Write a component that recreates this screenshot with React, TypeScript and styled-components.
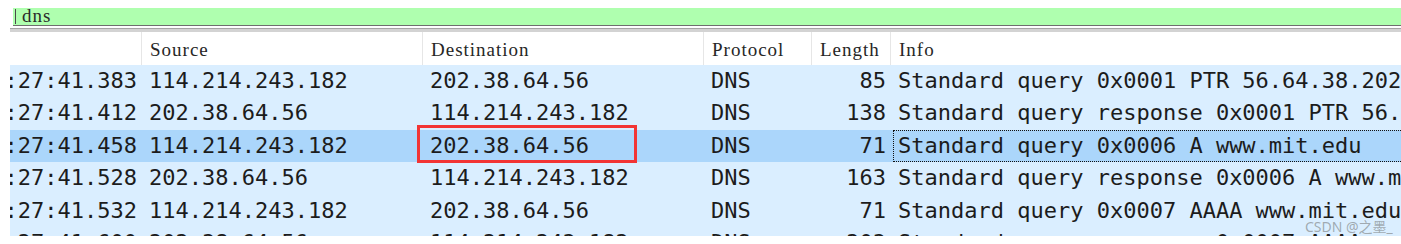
import React from "react";
import styled, { createGlobalStyle, css } from "styled-components";

const GlobalStyle = createGlobalStyle`
  html, body {
    margin: 0;
    padding: 0;
    background: #ffffff;
    overflow: hidden;
  }
`;

const COLUMNS = "132px 281px 281px 108px 79px 1fr";
const MONO = `"DejaVu Sans Mono", "Liberation Mono", monospace`;
const SERIF = `"Liberation Serif", "DejaVu Serif", serif`;

const Page = styled.div`
  position: relative;
  width: 1401px;
  height: 244px;
  overflow: hidden;
  background: #ffffff;
`;

// display filter
const FilterBar = styled.div`
  margin: 8px 0 0 13px;
  height: 17px;
  background: #afffaf;
  border-bottom: 1px solid #6e6e6e;
  display: flex;
  align-items: center;
`;

const Caret = styled.span`
  width: 1px;
  height: 15px;
  margin-left: 2px;
  background: #4a4a4a;
`;

const FilterText = styled.span`
  margin-left: 6px;
  font-family: ${SERIF};
  font-size: 19px;
  letter-spacing: 1px;
  line-height: 17px;
  color: #2a2a2a;
  padding-bottom: 2px;
`;

const Splitter = styled.div`
  margin: 2px 0 0 10px;
  height: 3px;
  border-top: 1px solid #a4a4a4;
  background: #d3d3d3;
`;

// packet list
const List = styled.div`
  margin-left: 10px;
  height: 204px;
  overflow: hidden;
`;

const HeaderRow = styled.div`
  display: grid;
  grid-template-columns: ${COLUMNS};
  height: 33px;
  background: #ffffff;
`;

const HeaderCell = styled.div`
  border-right: 1px solid #e6e6e6;
  padding: 2px 0 0 8px;
  font-family: ${SERIF};
  font-size: 19px;
  letter-spacing: 1px;
  line-height: 31px;
  color: #262626;
  white-space: nowrap;
  overflow: hidden;
  &:last-child {
    border-right: 0;
  }
`;

const Row = styled.div<{ $selected?: boolean }>`
  display: grid;
  grid-template-columns: ${COLUMNS};
  height: 32.4px;
  background: ${(p) => (p.$selected ? "#abd6fb" : "#daeeff")};
`;

const Cell = styled.div<{ $align?: "left" | "right" }>`
  position: relative;
  display: flex;
  justify-content: ${(p) => (p.$align === "right" ? "flex-end" : "flex-start")};
  padding: ${(p) => (p.$align === "right" ? "0 5px 0 0" : "0 0 0 7px")};
  font-family: ${MONO};
  font-size: 22px;
  line-height: 32.4px;
  color: #1c1c1c;
  white-space: nowrap;
  overflow: ${(p) => (p.$align === "right" ? "hidden" : "visible")};
`;

const InfoCell = styled(Cell)<{ $focus?: boolean }>`
  overflow: hidden;
  ${(p) =>
    p.$focus &&
    css`
      &::before {
        content: "";
        position: absolute;
        top: 0;
        bottom: 0;
        left: 2px;
        right: -4px;
        border: 1px dotted #111;
      }
    `}
`;

const Marker = styled.div`
  position: absolute;
  left: -6px;
  top: -5px;
  width: 220px;
  height: 38px;
  box-sizing: border-box;
  border: 3px solid #f23434;
  pointer-events: none;
`;

const Watermark = styled.div`
  position: absolute;
  left: 1305px;
  top: 219px;
  font-family: "Noto Sans", "Noto Sans CJK SC", sans-serif;
  font-size: 14px;
  line-height: 16px;
  color: rgba(110, 110, 110, 0.55);
`;

type Packet = {
  time: string;
  src: string;
  dst: string;
  proto: string;
  len: string;
  info: string;
};

const packets: Packet[] = [
  { time: ":27:41.383", src: "114.214.243.182", dst: "202.38.64.56", proto: "DNS", len: "85", info: "Standard query 0x0001 PTR 56.64.38.202.in-addr.arpa" },
  { time: ":27:41.412", src: "202.38.64.56", dst: "114.214.243.182", proto: "DNS", len: "138", info: "Standard query response 0x0001 PTR 56.64.38.202.in-addr.arpa" },
  { time: ":27:41.458", src: "114.214.243.182", dst: "202.38.64.56", proto: "DNS", len: "71", info: "Standard query 0x0006 A www.mit.edu" },
  { time: ":27:41.528", src: "202.38.64.56", dst: "114.214.243.182", proto: "DNS", len: "163", info: "Standard query response 0x0006 A www.mit.edu CNAME" },
  { time: ":27:41.532", src: "114.214.243.182", dst: "202.38.64.56", proto: "DNS", len: "71", info: "Standard query 0x0007 AAAA www.mit.edu" },
  { time: ":27:41.600", src: "202.38.64.56", dst: "114.214.243.182", proto: "DNS", len: "203", info: "Standard query response 0x0007 AAAA www.mit.edu" },
];

const SELECTED = 2;

export default function App() {
  return (
    <Page>
      <GlobalStyle />
      <FilterBar>
        <Caret />
        <FilterText>dns</FilterText>
      </FilterBar>
      <Splitter />
      <List>
        <HeaderRow>
          <HeaderCell />
          <HeaderCell>Source</HeaderCell>
          <HeaderCell>Destination</HeaderCell>
          <HeaderCell>Protocol</HeaderCell>
          <HeaderCell>Length</HeaderCell>
          <HeaderCell>Info</HeaderCell>
        </HeaderRow>
        {packets.map((p, i) => (
          <Row key={i} $selected={i === SELECTED}>
            <Cell $align="right">{p.time}</Cell>
            <Cell>{p.src}</Cell>
            <Cell>
              {p.dst}
              {i === SELECTED && <Marker />}
            </Cell>
            <Cell>{p.proto}</Cell>
            <Cell $align="right">{p.len}</Cell>
            <InfoCell $focus={i === SELECTED}>{p.info}</InfoCell>
          </Row>
        ))}
      </List>
      <Watermark>CSDN @之墨_</Watermark>
    </Page>
  );
}
